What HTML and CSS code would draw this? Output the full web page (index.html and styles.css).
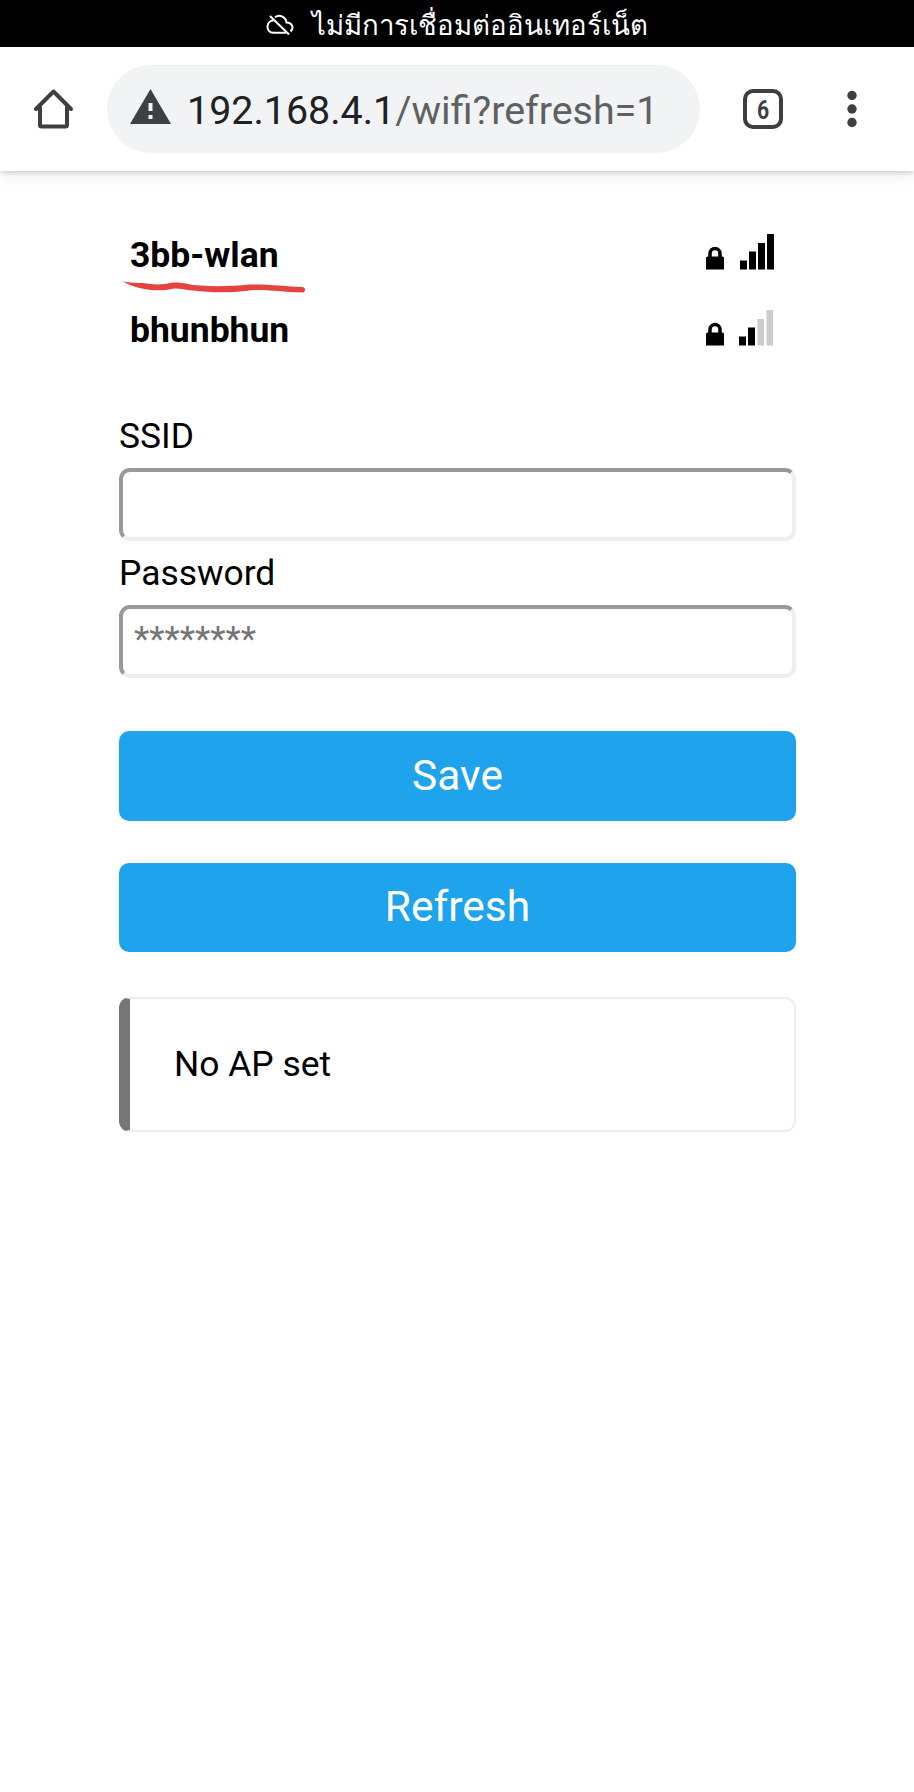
FILE: index.html
```html
<!DOCTYPE html>
<html lang="th">
<head>
    <meta charset="utf-8" />
    <title>WiFi setup</title>
    <meta name="viewport" content="width=device-width, initial-scale=1" />
    <link rel="stylesheet" href="styles.css">
</head>
<body>
<div class="status">
    <svg class="cloud" width="28" height="22" viewBox="0 0 28 22" fill="none" stroke="#fff" stroke-width="2">
        <path d="M4 2 L23 20.500" />
        <path d="M9 3.200 C14 0 20 3 20.500 8.500 C26 8.500 28.500 14 24.500 17.500" />
        <path d="M7.500 6.500 C0 6.500 -1 18.800 7.500 18.800 H20" />
    </svg>
    <span class="status-text">ไม่มีการเชื่อมต่ออินเทอร์เน็ต</span>
</div>

<div class="toolbar">
    <svg class="home" width="42" height="42" viewBox="0 0 42 42" fill="none" stroke="#3e3f41" stroke-width="4" stroke-linejoin="round" stroke-linecap="round">
        <path d="M4 21 L21.500 3.500 L39 21" />
        <path d="M8 19 V37 Q8 38.500 9.500 38.500 H33.500 Q35 38.500 35 37 V19" />
    </svg>
    <div class="url">
        <svg class="warn" width="41" height="35" viewBox="0 0 41 35">
            <path fill="#3f4045" d="M20.500 0 L41 35 H0 Z" />
            <path fill="#f1f3f4" d="M18.500 14 h4 v8 h-4 Z M18.500 26 h4 v4 h-4 Z" />
        </svg>
        <span class="address"><span class="host">192.168.4.1</span>/wifi?refresh=1</span>
    </div>
    <div class="tabs"><span class="count">6</span></div>
    <svg class="menu" width="10" height="38" viewBox="0 0 10 38" fill="#3e3f41">
        <circle cx="5" cy="5.500" r="4.700" />
        <circle cx="5" cy="19" r="4.700" />
        <circle cx="5" cy="32.500" r="4.700" />
    </svg>
</div>

<div class="content">
    <div class="network">
        <b class="name">3bb-wlan</b>
        <svg class="scribble" width="184" height="14" viewBox="0 0 184 14">
            <path fill="#e5433f" d="M0 0.500 C8 2 14 2 20 2 C30 4 40 4 50 1.500 C60 1 66 4 78 4.500 C94 6 112 5 126 3.500 C146 3 162 5.500 180 6 Q184 8.500 180.500 11.500 C160 11 150 9 130 9 C112 12 88 12 70 9.500 C60 9 54 6 46 8.500 C32 11 12 8 0 0.500 Z" />
        </svg>
        <svg class="signal" width="70" height="36" viewBox="0 0 70 36">
            <path d="M0 24 q0 -1.500 1.500 -1.500 H16.500 q1.500 0 1.500 1.500 V35.500 H0 Z" />
            <path fill="none" stroke="#000" stroke-width="3.500" d="M4 24 V19.500 A5 5 0 0 1 14 19.500 V24" />
            <path d="M34 26.500 h7 v9 h-7 Z M43 17.500 h7 v18 h-7 Z M52 9 h7 v26.500 h-7 Z M61 0 h7 v35.500 h-7 Z" />
        </svg>
    </div>
    <div class="network">
        <b class="name">bhunbhun</b>
        <svg class="signal" width="70" height="36" viewBox="0 0 70 36">
            <path d="M0 24 q0 -1.500 1.500 -1.500 H16.500 q1.500 0 1.500 1.500 V35.500 H0 Z" />
            <path fill="none" stroke="#000" stroke-width="3.500" d="M4 24 V19.500 A5 5 0 0 1 14 19.500 V24" />
            <path d="M33 26.500 h7 v9 h-7 Z M42 17.500 h7 v18 h-7 Z" />
            <path fill="#ccc" d="M51.500 9 h6.500 v26.500 h-6.500 Z M60.500 0 h6.500 v35.500 h-6.500 Z" />
        </svg>
    </div>

    <form class="wifi">
        <label for="ssid">SSID</label>
        <input type="text" id="ssid" />
        <label for="password">Password</label>
        <input type="text" id="password" placeholder="********" />
        <button type="button">Save</button>
        <button type="button">Refresh</button>
    </form>

    <div class="msg">No AP set</div>
</div>
</body>
</html>
```
FILE: styles.css
```css
* { box-sizing: border-box; }
body {
    margin: 0; background-color: #fff; color: #000;
    font: 35.4px/41px Roboto, sans-serif;
}
svg { display: block; flex: none; }

.status {
    display: flex; height: 47px; padding-left: 266px;
    background-color: #000; color: #fff;
}
.cloud { margin: 14px 18px 0 0; }
.status-text { font-size: 27.6px; line-height: 51px; white-space: nowrap; }

.toolbar {
    display: flex; align-items: center; height: 124px;
    padding-left: 32px;
    box-shadow: 0 2px 4px rgba(0,0,0,.14), 0 5px 14px rgba(0,0,0,.07);
}
.url {
    display: flex; align-items: center; width: 593px; height: 88px;
    margin-left: 33px; padding-left: 23px;
    background-color: #f1f3f4; border-radius: 44px;
}
.warn { margin-bottom: 5px; }
.address {
    margin-left: 16px; padding-top: 4px; color: #5f6063;
    font-size: 39.4px; line-height: 46px; white-space: nowrap;
}
.host { color: #202124; }
.tabs {
    width: 40px; height: 40px; margin-left: 43px;
    border: 4px solid #3e3f41; border-radius: 10px; color: #3e3f41;
    font-size: 25px; font-weight: bold; line-height: 35px; text-align: center;
}
.count { display: inline-block; transform: scaleX(.85); }
.menu { margin-left: 64px; }

.content { width: 677px; margin: 0 auto 0 119px; padding-top: 45px; }
.network {
    display: flex; position: relative; height: 76px;
    padding: 18px 20px 0 11px; justify-content: space-between;
}
.name { font-size: 35.5px; }
.network:first-child .name { padding-top: 1px; }
.scribble { position: absolute; left: 4px; top: 65px; }

.wifi { margin: 48px 0 0; }
.wifi label { display: block; }
.wifi label[for=password] { padding-top: 1px; margin-bottom: -1px; }
.wifi input {
    display: block; width: 100%; height: 73px; margin: 11px 0;
    padding: 0 11px 7px; border: 4px solid; border-radius: 11px;
    border-color: #999 #eee #eee #999; background-color: #fff;
    font: 35.4px Roboto, sans-serif; outline: none;
}
#password { padding-bottom: 5px; margin: 12px 0 53px; }
.wifi input::placeholder { color: #757575; }
.wifi button {
    display: block; width: 100%; height: 89.5px; margin-bottom: 42px;
    padding: 0; border: 0; border-radius: 10px;
    background-color: #1fa3ec; color: #fff;
    font: 42.5px/88px Roboto, sans-serif;
}
.msg {
    height: 135px; margin-top: 45px; padding: 45px 44px;
    border: 2px solid #eee; border-left: 11px solid #777;
    border-radius: 11px;
}
```
